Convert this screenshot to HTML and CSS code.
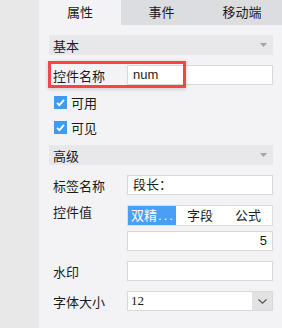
FILE: index.html
```html
<!DOCTYPE html>
<html lang="zh">
<head>
    <meta charset="UTF-8">
    <title>控件属性</title>
    <link rel="stylesheet" href="styles.css">
</head>
<body>
<div class="page">
    <div class="gutter"></div>
    <div class="panel">
        <div class="tabs">
            <div class="tab active">属性</div>
            <div class="tab">事件</div>
            <div class="tab">移动端</div>
        </div>

        <div class="content">
            <div class="section-head">
                <span>基本</span>
                <svg class="fold" width="7" height="4" viewBox="0 0 7 4"><path d="M0 0 H7 L3.5 4 Z" fill="#a3a3a3"/></svg>
            </div>

            <div class="row">
                <span class="label">控件名称</span>
                <div class="field">num</div>
                <span class="mark"></span>
            </div>

            <div class="check">
                <svg class="box" width="13" height="13" viewBox="0 0 13 13"><rect width="13" height="13" fill="#3f9bf0"/><path d="M3 6.8 L5.4 9.2 L10 3.8" stroke="#fff" stroke-width="1.8" fill="none"/></svg>
                <span>可用</span>
            </div>
            <div class="check">
                <svg class="box" width="13" height="13" viewBox="0 0 13 13"><rect width="13" height="13" fill="#3f9bf0"/><path d="M3 6.8 L5.4 9.2 L10 3.8" stroke="#fff" stroke-width="1.8" fill="none"/></svg>
                <span>可见</span>
            </div>

            <div class="section-head">
                <span>高级</span>
                <svg class="fold" width="7" height="4" viewBox="0 0 7 4"><path d="M0 0 H7 L3.5 4 Z" fill="#a3a3a3"/></svg>
            </div>

            <div class="row">
                <span class="label">标签名称</span>
                <div class="field">段长：</div>
            </div>

            <div class="row tall">
                <span class="label">控件值</span>
                <div class="stack">
                    <div class="segments">
                        <div class="seg on">双精<span class="dots">...</span></div>
                        <div class="seg">字段</div>
                        <div class="seg">公式</div>
                    </div>
                    <div class="field number">5</div>
                </div>
            </div>

            <div class="row">
                <span class="label">水印</span>
                <div class="field"></div>
            </div>

            <div class="row">
                <span class="label">字体大小</span>
                <div class="select">
                    <span class="value">12</span>
                    <span class="caret">
                        <svg width="9" height="5" viewBox="0 0 9 5"><path d="M0.5 0.5 L4.5 4.2 L8.5 0.5" stroke="#555" stroke-width="1.2" fill="none"/></svg>
                    </span>
                </div>
            </div>
        </div>
    </div>
</div>
</body>
</html>
```

FILE: styles.css
```css
body {
    margin: 0;
    font-family: "Liberation Sans", "Noto Sans CJK SC", sans-serif;
    font-size: 13px;
    color: #1a1a1a;
}
.page {
    display: flex;
    width: 282px;
    height: 328px;
}
.gutter {
    width: 39px;
    background: #e8e8e8;
}
.panel {
    flex: 1;
    background: #f3f3f5;
}
.tabs {
    display: grid;
    grid-template-columns: 82px 81px 1fr;
    height: 25px;
    background: #dcdde0;
}
.tab {
    text-align: center;
    line-height: 25px;
}
.tab.active {
    background: #f3f3f5;
}
.content {
    padding: 10px 9px 0 10px;
}
.section-head {
    display: flex;
    align-items: center;
    justify-content: space-between;
    height: 20px;
    padding: 0 6px 0 4px;
    background: #e8e8ea;
}
.row {
    position: relative;
    display: flex;
    align-items: center;
    height: 20px;
    margin-top: 10px;
    padding-left: 4px;
}
.row + .section-head,
.check + .section-head {
    margin-top: 5px;
}
.label {
    width: 74px;
    flex: none;
}
.field {
    flex: 1;
    height: 20px;
    box-sizing: border-box;
    border: 1px solid #d8d8d8;
    background: #fff;
    padding: 0 5px;
    line-height: 18px;
}
.field.number {
    text-align: right;
    margin-top: 5px;
}
.mark {
    position: absolute;
    left: -1px;
    top: -4px;
    width: 138px;
    height: 27px;
    box-sizing: border-box;
    border: 3px solid #f2464b;
    box-shadow: 0 1px 4px rgba(0, 0, 0, 0.18);
    pointer-events: none;
}
.check {
    display: flex;
    align-items: center;
    height: 25px;
    padding-left: 5px;
}
.row + .check {
    margin-top: 5px;
}
.check .box {
    margin-right: 4px;
}
.row.tall {
    height: auto;
    align-items: flex-start;
}
.row.tall .label {
    line-height: 15px;
}
.stack {
    flex: 1;
    display: flex;
    flex-direction: column;
}
.segments {
    display: grid;
    grid-template-columns: repeat(3, 1fr);
    height: 21px;
    box-sizing: border-box;
    border: 1px solid #dcdcdc;
    background: #fff;
}
.seg {
    text-align: center;
    line-height: 19px;
    white-space: nowrap;
}
.seg.on {
    background: #4a9ef3;
    color: #fff;
    text-align: left;
    padding-left: 3px;
}
.seg .dots {
    letter-spacing: 2px;
    margin-left: 1px;
}
.select {
    flex: 1;
    display: flex;
    height: 20px;
    box-sizing: border-box;
    border: 1px solid #d8d8d8;
    background: #fff;
}
.select .value {
    flex: 1;
    padding-left: 3px;
    line-height: 18px;
    font-family: "Liberation Serif", serif;
}
.caret {
    width: 20px;
    display: flex;
    align-items: center;
    justify-content: center;
    background: #e2e2e2;
}
```
